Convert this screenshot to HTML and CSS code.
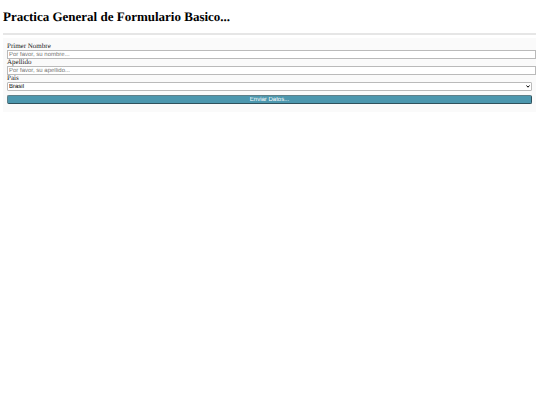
FILE: index.html
```html
<!DOCTYPE html>
<html lang="es">
<head>
  <meta charset="utf-8" />
  <meta name="viewport" content="width=device-width, initial-scale=1" />
  <title>Practica General de Formulario Basico</title>
  <link rel="stylesheet" href="styles.css">
</head>
<body>
  <h1>Practica General de Formulario Basico...</h1>
  <hr>

  <div class="container">
    <form action="#">
      <label for="nombre">Primer Nombre</label>
      <input type="text" id="nombre" name="nombre" placeholder="Por favor, su nombre...">

      <label for="apellido">Apellido</label>
      <input type="text" id="apellido" name="apellido" placeholder="Por favor, su apellido...">

      <label for="pais">Pais</label>
      <div class="select">
        <select id="pais" name="pais">
          <option value="brasil">Brasil</option>
        </select>
        <svg class="arrow" viewBox="0 0 8 6" aria-hidden="true"><path d="M1 1l3 3.4L7 1" fill="none" stroke="#000" stroke-width="2"/></svg>
      </div>

      <button type="submit">Enviar Datos...</button>
    </form>
  </div>
</body>
</html>
```

FILE: styles.css
```css
* {
  box-sizing: border-box;
}

body {
  margin: 0 4px 0 3px;
  font-family: "Liberation Serif", "Times New Roman", serif;
  font-size: 7px;
  line-height: 7px;
  color: #000;
  background: #fff;
  text-rendering: geometricPrecision;
}

h1 {
  margin: 9px 0;
  font-size: 13px;
  line-height: 15px;
}

hr {
  height: 2px;
  margin: 0 0 3px;
  border: 0;
  background: #e6e6e6;
}

.container {
  padding: 5px 4px 8px;
  background: #fafafa;
}

label {
  display: block;
  color: #222;
}

input,
select,
button {
  display: block;
  height: 9px;
  margin: 0;
  font-family: "Liberation Sans", Arial, sans-serif;
  font-size: 6px;
  line-height: 7px;
  text-rendering: geometricPrecision;
}

/* the text boxes run over the right padding */
input {
  width: calc(100% + 4px);
  padding: 0 1px;
  border: 1px solid #bababa;
  background: #fff;
}

input::placeholder {
  color: #757575;
}

.select {
  position: relative;
}

select {
  width: 100%;
  padding: 1px 1px 0;
  appearance: none;
  border: 1px solid #bababa;
  border-radius: 1px;
  color: #000;
  background: #fff;
}

.arrow {
  position: absolute;
  top: 3px;
  right: 2px;
  width: 4px;
  height: 3px;
  pointer-events: none;
}

button {
  width: 100%;
  margin-top: 4px;
  padding: 1px 0 0;
  border: 1px solid;
  border-color: #5f7f88 #2f515c #2f515c #5f7f88;
  border-radius: 2px;
  color: #fff;
  background: #4c97ae;
}
```
